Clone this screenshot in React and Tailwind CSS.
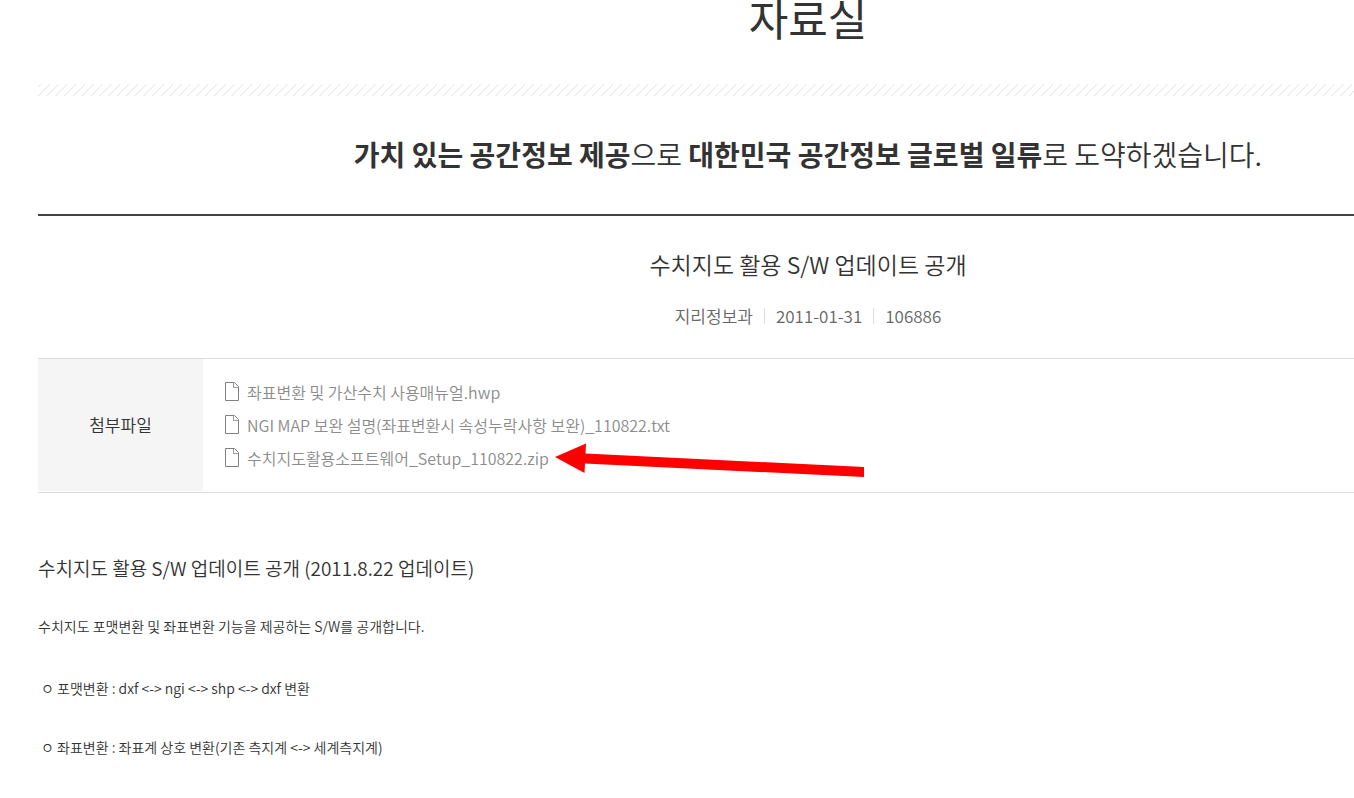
import React from 'react';

const files = [
  { name: '좌표변환 및 가산수치 사용매뉴얼.hwp' },
  { name: 'NGI MAP 보완 설명(좌표변환시 속성누락사항 보완)_110822.txt' },
  { name: '수치지도활용소프트웨어_Setup_110822.zip', marked: true },
];

const FileIcon = () => (
  <svg className="shrink-0" width="14" height="19" viewBox="0 0 14 19" fill="none" stroke="#808080" aria-hidden="true">
    <path d="M0.5 0.5H9.5L13.5 4.5V18.5H0.5Z" />
    <path d="M8.5 0.5V5.5H13.5" strokeWidth="0.8" />
  </svg>
);

// Red arrow pointing at the file to download
const Arrow = () => (
  <svg className="absolute left-full -top-1 ml-1.5" width="310" height="35" viewBox="0 0 310 35" aria-hidden="true">
    <path d="M0 15L31 1.500L30.500 11.500L309 25V35L30 21.500L29.500 31Z" fill="#ff0000" />
  </svg>
);

const Stripes = () => (
  <svg className="block w-full" height="12" aria-hidden="true">
    <defs>
      <pattern id="stripes" width="8.800" height="12" patternUnits="userSpaceOnUse">
        <path d="M-8.800 12L3.200 0M0 12L12 0" stroke="#dcdcdc" strokeWidth="0.9" />
      </pattern>
    </defs>
    <rect width="100%" height="12" fill="url(#stripes)" />
  </svg>
);

const App = () => {
  return (
    <div className="overflow-hidden bg-white font-['Noto_Sans_CJK_KR','Noto_Sans',sans-serif] font-[350] text-[#333]">
      <main className="ml-[38px] min-w-[1540px] pb-9">
        <h1 className="text-center text-[43px] leading-[34px] font-normal">자료실</h1>

        <div className="mt-[50px]">
          <Stripes />
        </div>

        <p className="border-b-2 border-[#444] pt-[39px] pb-[41px] text-center text-[28px] leading-[38px]">
          <strong className="font-bold">가치 있는 공간정보 제공</strong>으로{' '}
          <strong className="font-bold">대한민국 공간정보 글로벌 일류</strong>로 도약하겠습니다.
        </p>

        <header className="flex flex-col items-center pt-[30px] pb-[30px]">
          <h2 className="text-[23px] leading-9">수치지도 활용 S/W 업데이트 공개</h2>
          <ul className="mt-[22px] flex items-center text-[17px] leading-6 text-[#666]">
            <li>지리정보과</li>
            <li className="mx-[11px] h-4 w-px bg-[#ddd]" aria-hidden="true" />
            <li>2011-01-31</li>
            <li className="mx-[11px] h-4 w-px bg-[#ddd]" aria-hidden="true" />
            <li>106886</li>
          </ul>
        </header>

        <section className="flex border-y border-[#ddd]">
          <h3 className="mb-px flex w-[165px] items-center justify-center bg-[#f5f5f5] text-[17px]">첨부파일</h3>
          <ul className="pt-4 pb-[18px] pl-[22px] text-base text-[#8c8c8c]">
            {files.map((file) => (
              <li key={file.name} className="flex h-[33px] items-center">
                <a href="#" className="relative flex items-center gap-2">
                  <FileIcon />
                  {file.name}
                  {file.marked && <Arrow />}
                </a>
              </li>
            ))}
          </ul>
        </section>

        <article className="pt-[59px] text-sm leading-6">
          <h4 className="text-[19px] leading-8">수치지도 활용 S/W 업데이트 공개 (2011.8.22 업데이트)</h4>
          <p className="mt-[30px]">수치지도 포맷변환 및 좌표변환 기능을 제공하는 S/W를 공개합니다.</p>
          <ul className="mt-[38px] flex flex-col gap-[35px] pl-[3px]">
            <li>ㅇ 포맷변환 : dxf &lt;-&gt; ngi &lt;-&gt; shp &lt;-&gt; dxf 변환</li>
            <li>ㅇ 좌표변환 : 좌표계 상호 변환(기존 측지계 &lt;-&gt; 세계측지계)</li>
          </ul>
        </article>
      </main>
    </div>
  );
};

export default App;
